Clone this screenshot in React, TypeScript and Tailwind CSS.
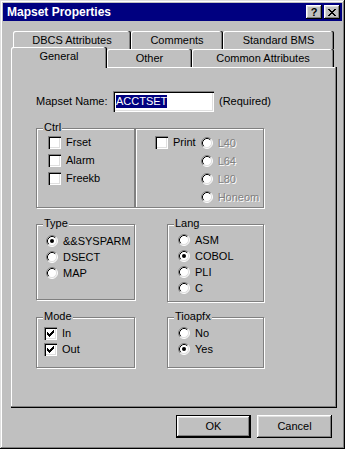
import type { ReactNode } from "react";

const raised =
  "shadow-[inset_-1px_-1px_#000,inset_1px_1px_#fff,inset_-2px_-2px_#808080,inset_2px_2px_#dfdfdf]";
const sunken =
  "shadow-[inset_1px_1px_#808080,inset_2px_2px_#000,inset_-1px_-1px_#fff,inset_-2px_-2px_#dfdfdf]";
const tabEdge = "shadow-[inset_-1px_0_#000,inset_-2px_0_#808080,inset_1px_1px_#fff]";

function Check({ on }: { on?: boolean }) {
  return (
    <div className={`w-[13px] h-[13px] shrink-0 bg-white ${sunken}`}>
      {on && (
        <svg width="13" height="13" viewBox="0 0 13 13" shapeRendering="crispEdges">
          <path d="M3 5h1v3H3zM4 6h1v3H4zM5 7h1v3H5zM6 6h1v3H6zM7 5h1v3H7zM8 4h1v3H8zM9 3h1v3H9z" fill="#000" />
        </svg>
      )}
    </div>
  );
}

function Radio({ on }: { on?: boolean }) {
  return (
    <svg width="12" height="12" viewBox="0 0 12 12" className="shrink-0">
      <circle cx="6" cy="6" r="5" fill="#fff" />
      <path d="M2.11 9.89A5.5 5.5 0 0 1 9.89 2.11" fill="none" stroke="#808080" />
      <path d="M9.89 2.11A5.5 5.5 0 0 1 2.11 9.89" fill="none" stroke="#fff" />
      <path d="M2.82 9.18A4.5 4.5 0 0 1 9.18 2.82" fill="none" stroke="#000" />
      <path d="M9.18 2.82A4.5 4.5 0 0 1 2.82 9.18" fill="none" stroke="#dfdfdf" />
      {on && <circle cx="6" cy="6" r="2" fill="#000" />}
    </svg>
  );
}

function Group({ label, className, children }: { label?: string; className: string; children: ReactNode }) {
  return (
    <div className={`relative shrink-0 border border-[#808080] shadow-[1px_1px_0_#fff,inset_1px_1px_0_#fff] ${className}`}>
      {label && <span className="absolute left-[6px] -top-[8px] px-[1px] bg-[#c0c0c0] leading-[13px]">{label}</span>}
      {children}
    </div>
  );
}

function CheckRow({ label, on }: { label: string; on?: boolean }) {
  return (
    <div className="flex items-center gap-[5px] h-[13px]">
      <Check on={on} />
      <span className="leading-[13px]">{label}</span>
    </div>
  );
}

function RadioRow({ label, on, disabled }: { label: string; on?: boolean; disabled?: boolean }) {
  return (
    <div className="flex items-center gap-[5px] h-[12px]">
      <Radio on={on} />
      <span className={disabled ? "leading-[13px] text-[#808080] [text-shadow:1px_1px_0_#fff]" : "leading-[13px]"}>{label}</span>
    </div>
  );
}

export default function App() {
  return (
    <div className="w-[345px] h-[449px] bg-[#c0c0c0] p-[3px] flex flex-col text-[11px] text-black font-['Liberation_Sans',Arial,sans-serif] shadow-[inset_-1px_-1px_#000,inset_1px_1px_#dfdfdf,inset_-2px_-2px_#808080,inset_2px_2px_#fff]">
      <div className="h-[18px] bg-[#000080] flex items-center pl-[4px] pr-[2px]">
        <span className="text-white font-bold text-[12px] leading-[14px]">Mapset Properties</span>
        <div className="ml-auto flex gap-[2px]">
          <div className={`w-[16px] h-[14px] bg-[#c0c0c0] flex items-center justify-center font-bold text-[11px] leading-[11px] ${raised}`}>?</div>
          <div className={`w-[16px] h-[14px] bg-[#c0c0c0] flex items-center justify-center ${raised}`}>
            <svg width="8" height="7" viewBox="0 0 8 7" shapeRendering="crispEdges">
              <path d="M0 0h2v1H0zM6 0h2v1H6zM1 1h2v1H1zM5 1h2v1H5zM2 2h4v1H2zM3 3h2v1H3zM2 4h4v1H2zM1 5h2v1H1zM5 5h2v1H5zM0 6h2v1H0zM6 6h2v1H6z" fill="#000" />
            </svg>
          </div>
        </div>
      </div>

      <div className="pl-[8px] pt-[10px]">
        <div className="flex h-[16px] pl-[2px]">
          <div className={`w-[118px] h-[18px] shrink-0 flex items-center justify-center rounded-t-[2px] bg-[#c0c0c0] ${tabEdge}`}>DBCS Attributes</div>
          <div className={`w-[92px] h-[18px] shrink-0 flex items-center justify-center rounded-t-[2px] bg-[#c0c0c0] ${tabEdge}`}>Comments</div>
          <div className={`w-[111px] h-[18px] shrink-0 flex items-center justify-center rounded-t-[2px] bg-[#c0c0c0] ${tabEdge}`}>Standard BMS</div>
        </div>
        <div className="flex items-end h-[20px]">
          <div className={`relative z-10 w-[96px] h-[21px] -mb-[1px] pb-[2px] shrink-0 flex items-center justify-center rounded-t-[2px] bg-[#c0c0c0] ${tabEdge}`}>General</div>
          <div className={`w-[85px] h-[18px] shrink-0 flex items-center justify-center rounded-t-[2px] bg-[#c0c0c0] ${tabEdge}`}>Other</div>
          <div className={`w-[142px] h-[18px] shrink-0 flex items-center justify-center rounded-t-[2px] bg-[#c0c0c0] ${tabEdge}`}>Common Attributes</div>
        </div>

        <div className="w-[326px] h-[341px] flex flex-col pt-[24px] pl-[25px] shadow-[inset_-1px_-1px_#000,inset_-2px_-2px_#808080,inset_1px_1px_#fff]">
          <div className="flex items-center h-[21px]">
            <span className="w-[77px] leading-[13px]">Mapset Name:</span>
            <div className={`w-[101px] h-[21px] bg-white flex items-center pl-[3px] ${sunken}`}>
              <span className="bg-[#000080] text-white leading-[13px]">ACCTSET</span>
            </div>
            <span className="ml-[5px] leading-[13px]">(Required)</span>
          </div>

          <div className="flex mt-[16px]">
            <Group label="Ctrl" className="w-[99px] h-[80px] pl-[11px] pt-[7px] flex flex-col gap-[5px]">
              <CheckRow label="Frset" />
              <CheckRow label="Alarm" />
              <CheckRow label="Freekb" />
            </Group>
            <Group className="w-[129px] h-[80px] pl-[19px] pt-[7px] flex items-start">
              <div className="flex items-center gap-[5px] h-[13px]">
                <Check />
                <span className="leading-[13px]">Print</span>
              </div>
              <div className="flex flex-col gap-[6px] ml-[5px] pt-[1px]">
                <RadioRow label="L40" disabled />
                <RadioRow label="L64" disabled />
                <RadioRow label="L80" disabled />
                <RadioRow label="Honeom" disabled />
              </div>
            </Group>
          </div>

          <div className="flex items-start mt-[16px]">
            <Group label="Type" className="w-[99px] h-[76px] pl-[9px] pt-[10px] flex flex-col gap-[4px]">
              <RadioRow label="&&SYSPARM" on />
              <RadioRow label="DSECT" />
              <RadioRow label="MAP" />
            </Group>
            <Group label="Lang" className="ml-[32px] w-[97px] h-[78px] pl-[10px] pt-[9px] flex flex-col gap-[4px]">
              <RadioRow label="ASM" />
              <RadioRow label="COBOL" on />
              <RadioRow label="PLI" />
              <RadioRow label="C" />
            </Group>
          </div>

          <div className="flex items-start mt-[15px]">
            <Group label="Mode" className="w-[99px] h-[51px] pl-[7px] pt-[9px] flex flex-col gap-[3px]">
              <CheckRow label="In" on />
              <CheckRow label="Out" on />
            </Group>
            <Group label="Tioapfx" className="ml-[32px] w-[97px] h-[51px] pl-[10px] pt-[9px] flex flex-col gap-[4px]">
              <RadioRow label="No" />
              <RadioRow label="Yes" on />
            </Group>
          </div>
        </div>
      </div>

      <div className="flex justify-end gap-[6px] pr-[10px] mt-[7px]">
        <div className="w-[75px] h-[23px] border border-black">
          <div className={`w-full h-full flex items-center justify-center ${raised}`}>OK</div>
        </div>
        <div className={`w-[75px] h-[23px] flex items-center justify-center ${raised}`}>Cancel</div>
      </div>
    </div>
  );
}
